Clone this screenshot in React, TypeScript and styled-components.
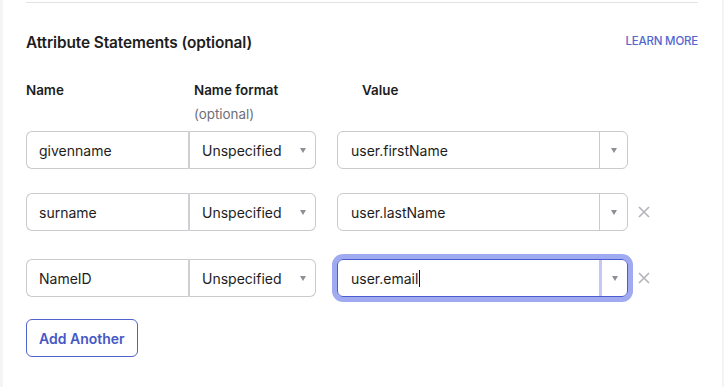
import React from "react";
import styled, { createGlobalStyle } from "styled-components";

const GlobalStyle = createGlobalStyle`
  html, body {
    margin: 0;
    padding: 0;
    background: #f4f4f5;
  }
  body {
    font-family: Inter, "Noto Sans", Arial, sans-serif;
    color: #1d1d21;
  }
`;

const Page = styled.div`
  display: flex;
  height: 387px;
  padding: 0 2px 0 3px;
  box-sizing: border-box;
  background: #f4f4f5;
`;

const Panel = styled.div`
  flex: 1;
  background: #ffffff;
  padding: 0 24px 0 23px;
  display: flex;
  flex-direction: column;
`;

const Divider = styled.div`
  margin-top: 2px;
  height: 1px;
  background: #e1e1e4;
`;

const TitleRow = styled.div`
  margin-top: 30px;
  display: flex;
  justify-content: space-between;
  align-items: center;
`;

const Title = styled.h2`
  margin: 0;
  font-size: 15.4px;
  line-height: 20px;
  font-weight: 600;
  letter-spacing: -0.1px;
`;

const LearnMore = styled.a`
  font-size: 11.5px;
  font-weight: 500;
  line-height: 14px;
  color: #5466cf;
  text-decoration: none;
  letter-spacing: -0.2px;
  margin-top: -4px;
`;

const Grid = styled.div`
  display: grid;
  grid-template-columns: 162px 128px 312px 30px;
  column-gap: 0;
`;

const HeaderGrid = styled(Grid)`
  margin-top: 28px;
`;

const ColHead = styled.div<{ $indent: number }>`
  padding-left: ${(p) => p.$indent}px;
  font-size: 13.4px;
  font-weight: 600;
  line-height: 18px;
`;

const Hint = styled.div`
  margin-top: 6px;
  font-size: 13.4px;
  line-height: 18px;
  color: #6e6e78;
  font-weight: 400;
`;

const Row = styled(Grid)<{ $top: number }>`
  margin-top: ${(p) => p.$top}px;
  align-items: center;
`;

const NameInput = styled.div`
  height: 38px;
  box-sizing: border-box;
  border: 1px solid #c9c9ce;
  border-right: none;
  border-radius: 6px 0 0 6px;
  display: flex;
  align-items: center;
  padding-left: 12px;
  font-size: 14px;
`;

const FormatSelect = styled.div`
  height: 38px;
  box-sizing: border-box;
  border: 1px solid #c9c9ce;
  border-left: 2px solid #cfcfd3;
  border-radius: 0 6px 6px 0;
  display: flex;
  align-items: center;
  justify-content: space-between;
  padding: 0 9px 0 12px;
  font-size: 14px;
`;

const ValueBox = styled.div<{ $focused?: boolean }>`
  margin-left: 21px;
  height: 38px;
  box-sizing: border-box;
  border: 1px solid ${(p) => (p.$focused ? "#4a5cd0" : "#c9c9ce")};
  border-radius: 6px;
  display: flex;
  align-items: stretch;
  font-size: 14px;
  box-shadow: ${(p) => (p.$focused ? "0 0 0 5px #a0aaf0" : "none")};
`;

const ValueText = styled.div`
  flex: 1;
  display: flex;
  align-items: center;
  padding-left: 13px;
`;

const Caret = styled.span`
  display: inline-block;
  width: 1px;
  height: 17px;
  background: #111;
  margin-left: 1px;
`;

const Toggle = styled.div<{ $focused?: boolean }>`
  width: 28px;
  box-sizing: border-box;
  border-left: ${(p) => (p.$focused ? "3px solid #c3c9f2" : "1px solid #c9c9ce")};
  display: flex;
  align-items: center;
  justify-content: center;
`;

const Arrow = styled.span`
  width: 0;
  height: 0;
  border-left: 3.5px solid transparent;
  border-right: 3.5px solid transparent;
  border-top: 5px solid #8e8e96;
`;

const Remove = styled.button`
  border: none;
  background: none;
  padding: 0;
  margin-left: 10px;
  width: 12px;
  height: 12px;
  display: flex;
  cursor: pointer;
`;

const AddButton = styled.button`
  margin-top: 22px;
  align-self: flex-start;
  height: 38px;
  padding: 0 12px;
  border: 1px solid #5063cc;
  border-radius: 6px;
  background: #fff;
  color: #4658c4;
  font-family: inherit;
  font-size: 14px;
  font-weight: 600;
`;

type Statement = { name: string; value: string; removable: boolean; focused?: boolean; top: number };

const statements: Statement[] = [
  { name: "givenname", value: "user.firstName", removable: false, top: 8 },
  { name: "surname", value: "user.lastName", removable: true, top: 24 },
  { name: "NameID", value: "user.email", removable: true, focused: true, top: 28 },
];

const CloseIcon = () => (
  <svg width="12" height="12" viewBox="0 0 12 12">
    <path d="M1 1L11 11M11 1L1 11" stroke="#b4b4ba" strokeWidth="1.6" />
  </svg>
);

export default function App() {
  return (
    <>
      <GlobalStyle />
      <Page>
        <Panel>
          <Divider />
          <TitleRow>
            <Title>Attribute Statements (optional)</Title>
            <LearnMore href="#">LEARN MORE</LearnMore>
          </TitleRow>
          <HeaderGrid>
            <ColHead $indent={0}>Name</ColHead>
            <ColHead $indent={6}>
              Name format
              <Hint>(optional)</Hint>
            </ColHead>
            <ColHead $indent={46}>Value</ColHead>
          </HeaderGrid>
          {statements.map((s) => (
            <Row key={s.name} $top={s.top}>
              <NameInput>{s.name}</NameInput>
              <FormatSelect>
                Unspecified
                <Arrow />
              </FormatSelect>
              <ValueBox $focused={s.focused}>
                <ValueText>
                  {s.value}
                  {s.focused && <Caret />}
                </ValueText>
                <Toggle $focused={s.focused}>
                  <Arrow />
                </Toggle>
              </ValueBox>
              {s.removable ? (
                <Remove aria-label="Remove">
                  <CloseIcon />
                </Remove>
              ) : (
                <span />
              )}
            </Row>
          ))}
          <AddButton>Add Another</AddButton>
        </Panel>
      </Page>
    </>
  );
}
